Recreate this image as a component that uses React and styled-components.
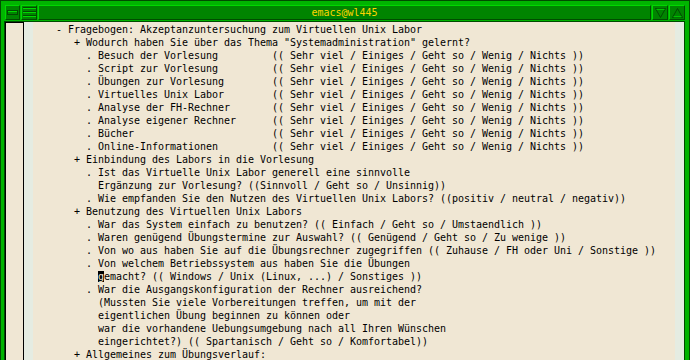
import React from "react";
import styled, { createGlobalStyle } from "styled-components";

const GlobalStyle = createGlobalStyle`
  html, body {
    margin: 0;
    padding: 0;
    background: #00b400;
  }
  body {
    font-family: "DejaVu Sans Mono", "Liberation Mono", monospace;
  }
`;

const BEIGE = "#f0e7d4";
const FRAME = "#00b400";
const TITLE = "#008400";
const LIGHT = "#00d800";
const DARK = "#004c00";

const Window = styled.div`
  width: 690px;
  height: 360px;
  box-sizing: border-box;
  overflow: hidden;
  background: ${FRAME};
  border: 1px solid ${DARK};
  border-bottom: none;
  padding: 3px 4px 0 3px;
  display: flex;
  flex-direction: column;
`;

const TitleRow = styled.div`
  display: flex;
  gap: 1px;
  height: 15px;
  margin: 1px 0 1px 1px;
`;

const Bevel = styled.div`
  box-sizing: border-box;
  width: ${(p) => p.$w || 16}px;
  height: 15px;
  background: ${TITLE};
  border-top: 1px solid ${LIGHT};
  border-left: 1px solid ${LIGHT};
  border-bottom: 1px solid ${DARK};
  border-right: 1px solid ${DARK};
  display: flex;
  align-items: center;
  justify-content: center;
  flex: ${(p) => (p.$grow ? 1 : "none")};
`;

const TitleText = styled.span`
  color: #ffd400;
  font-family: "DejaVu Sans Mono", "Liberation Mono", monospace;
  font-size: 10px;
  letter-spacing: -0.02px;
  line-height: 13px;
`;

const Body = styled.div`
  flex: 1;
  display: flex;
  border-top: 1px solid ${DARK};
  border-left: 1px solid ${DARK};
  border-right: 1px solid ${DARK};
  min-height: 0;
`;

const ScrollBar = styled.div`
  width: 17px;
  border: 1px solid #000;
  border-bottom: none;
  background: ${BEIGE};
`;

const Fringe = styled.div`
  width: 9px;
  background: #e5ece2;
`;

const TextArea = styled.div`
  flex: 1;
  background: ${BEIGE};
  padding: 1px 0 0 5px;
  overflow: hidden;
`;

const Line = styled.div`
  white-space: pre;
  font-family: "DejaVu Sans Mono", "Liberation Mono", monospace;
  font-size: 10px;
  letter-spacing: -0.02px;
  line-height: 13px;
  height: 13px;
  color: #000;
`;

const Cursor = styled.span`
  background: #000;
  color: ${BEIGE};
`;

const MenuIcon = () => (
  <svg width="11" height="5" viewBox="0 0 11 5">
    <rect x="0.5" y="0.5" width="10" height="4" fill={TITLE} stroke={DARK} />
    <line x1="1" y1="1.5" x2="10" y2="1.5" stroke={LIGHT} />
  </svg>
);

const LinesIcon = () => (
  <svg width="13" height="11" viewBox="0 0 13 11">
    {[1, 5, 9].map((y) => (
      <g key={y}>
        <line x1="0" y1={y - 0.5} x2="13" y2={y - 0.5} stroke={DARK} />
        <line x1="0" y1={y + 0.5} x2="13" y2={y + 0.5} stroke={LIGHT} />
      </g>
    ))}
  </svg>
);

const Triangle = ({ up }) => (
  <svg width="11" height="10" viewBox="0 0 11 10">
    {up ? (
      <>
        <polygon points="5.5,0.5 10.5,9.5 0.5,9.5" fill="none" stroke={DARK} />
        <line x1="1.5" y1="8.8" x2="9.5" y2="8.8" stroke={LIGHT} />
      </>
    ) : (
      <>
        <polygon points="0.5,0.5 10.5,0.5 5.5,9.5" fill="none" stroke={DARK} />
        <line x1="1.5" y1="1.3" x2="9.5" y2="1.3" stroke={LIGHT} />
      </>
    )}
  </svg>
);

const scale = "(( Sehr viel / Einiges / Geht so / Wenig / Nichts ))";
const sources = [
  "Besuch der Vorlesung",
  "Script zur Vorlesung",
  "Übungen zur Vorlesung",
  "Virtuelles Unix Labor",
  "Analyse der FH-Rechner",
  "Analyse eigener Rechner",
  "Bücher",
  "Online-Informationen",
];

const lines = [
  "   - Fragebogen: Akzeptanzuntersuchung zum Virtuellen Unix Labor",
  '      + Wodurch haben Sie über das Thema "Systemadministration" gelernt?',
  ...sources.map((s) => "        . " + s.padEnd(29, " ") + scale),
  "      + Einbindung des Labors in die Vorlesung",
  "        . Ist das Virtuelle Unix Labor generell eine sinnvolle",
  "          Ergänzung zur Vorlesung? ((Sinnvoll / Geht so / Unsinnig))",
  "        . Wie empfanden Sie den Nutzen des Virtuellen Unix Labors? ((positiv / neutral / negativ))",
  "      + Benutzung des Virtuellen Unix Labors",
  "        . War das System einfach zu benutzen? (( Einfach / Geht so / Umstaendlich ))",
  "        . Waren genügend Übungstermine zur Auswahl? (( Genügend / Geht so / Zu wenige ))",
  "        . Von wo aus haben Sie auf die Übungsrechner zugegriffen (( Zuhause / FH oder Uni / Sonstige ))",
  "        . Von welchem Betriebssystem aus haben Sie die Übungen",
  "CURSOR",
  "        . War die Ausgangskonfiguration der Rechner ausreichend?",
  "          (Mussten Sie viele Vorbereitungen treffen, um mit der",
  "          eigentlichen Übung beginnen zu können oder",
  "          war die vorhandene Uebungsumgebung nach all Ihren Wünschen",
  "          eingerichtet?) (( Spartanisch / Geht so / Komfortabel))",
  "      + Allgemeines zum Übungsverlauf:",
];

export default function App() {
  return (
    <>
      <GlobalStyle />
      <Window>
        <TitleRow>
          <Bevel $w={15}>
            <MenuIcon />
          </Bevel>
          <Bevel $w={16}>
            <LinesIcon />
          </Bevel>
          <Bevel $grow>
            <TitleText>emacs@wl445</TitleText>
          </Bevel>
          <Bevel $w={16}>
            <Triangle />
          </Bevel>
          <Bevel $w={16}>
            <Triangle up />
          </Bevel>
        </TitleRow>
        <Body>
          <ScrollBar />
          <Fringe />
          <TextArea>
            {lines.map((l, i) =>
              l === "CURSOR" ? (
                <Line key={i}>
                  {"          "}
                  <Cursor>g</Cursor>
                  {"emacht? (( Windows / Unix (Linux, ...) / Sonstiges ))"}
                </Line>
              ) : (
                <Line key={i}>{l}</Line>
              )
            )}
          </TextArea>
          <Fringe />
        </Body>
      </Window>
    </>
  );
}
